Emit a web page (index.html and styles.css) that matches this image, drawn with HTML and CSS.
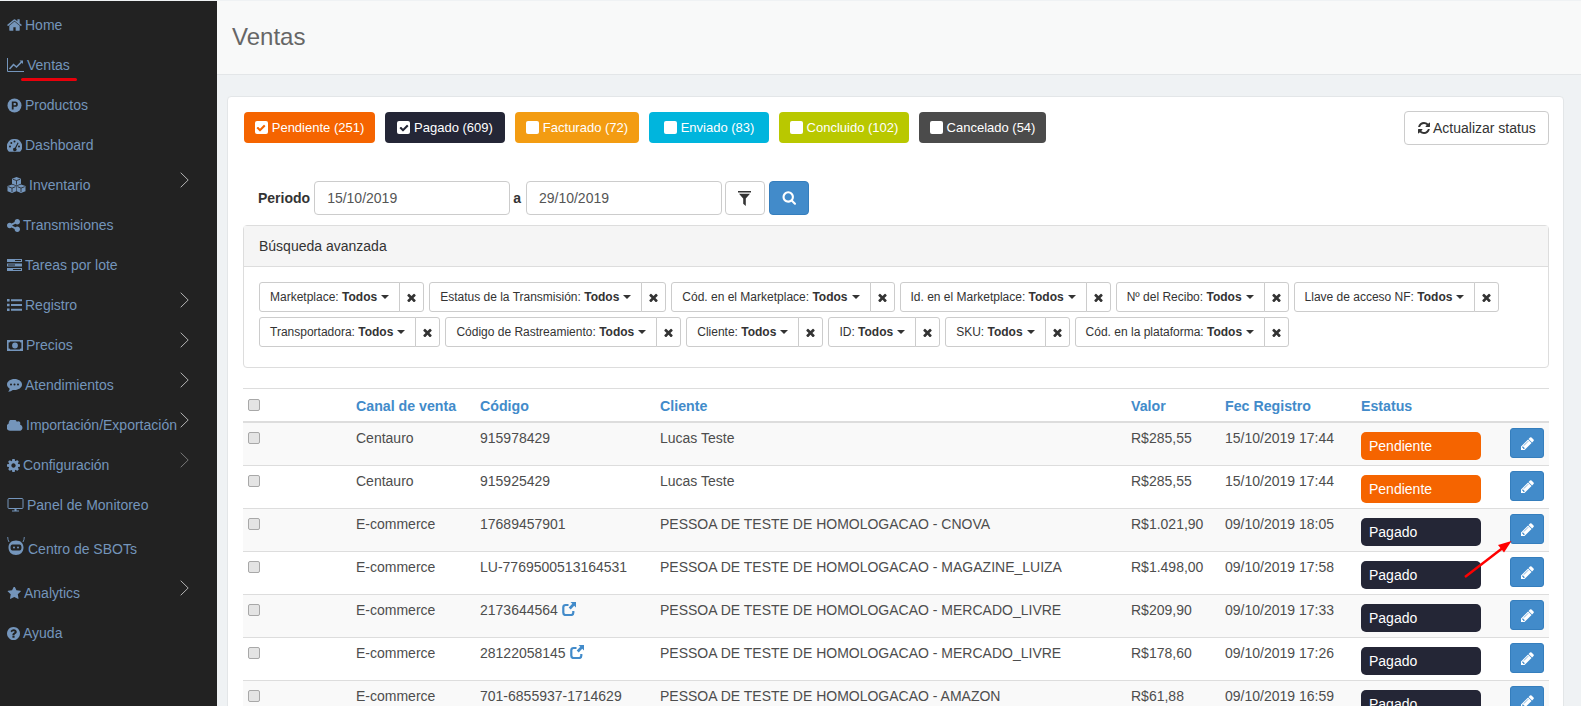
FILE: index.html
```html
<!DOCTYPE html>
<html lang="es">
<head>
<meta charset="utf-8">
<title>Ventas</title>
<link rel="stylesheet" href="styles.css">
</head>
<body>
<svg class="defs" width="0" height="0">
  <symbol id="i-home" viewBox="64 128 1664 1536"><path d="M1472 992v480q0 26-19 45t-45 19h-384v-384h-256v384h-384q-26 0-45-19t-19-45v-480q0-1 .5-3t.5-3l575-474 575 474q1 2 1 6zm223-69l-62 74q-8 9-21 11h-3q-13 0-21-7l-692-577-692 577q-12 8-24 7-13-2-21-11l-62-74q-8-10-7-23.5t11-21.5l719-599q32-26 76-26t76 26l244 204v-195q0-14 9-23t23-9h192q14 0 23 9t9 23v408l219 182q10 8 11 21.5t-7 23.5z"/></symbol>
  <symbol id="i-chart" viewBox="0 0 17 14"><path d="M.5 0v13.5H17" fill="none" stroke="currentColor"/><path d="M2.5 11l4-4.5 3 2.5L15 3.5" fill="none" stroke="currentColor" stroke-width="1.6"/><path d="M12.5 2.5H16V6z"/></symbol>
  <symbol id="i-p" viewBox="0 0 15 15"><circle cx="7.5" cy="7.5" r="7"/><path fill="#222" fill-rule="evenodd" d="M4.8 3.5h3.4a2.6 2.6 0 0 1 0 5.3H6.6v2.7H4.8zm1.8 1.6v2.1h1.4a1 1 0 0 0 0-2.1z"/></symbol>
  <symbol id="i-dash" viewBox="0 0 15 13"><path fill-rule="evenodd" d="M7.5 0A7.5 7.5 0 0 0 1.4 12.2c.2.3.5.5.9.5h10.4c.4 0 .7-.2.9-.5A7.5 7.5 0 0 0 7.5 0z"/><g fill="#222"><circle cx="3" cy="7.5" r="1"/><circle cx="4.3" cy="4" r="1"/><circle cx="7.5" cy="2.6" r="1"/><circle cx="12" cy="7.5" r="1"/><path d="M10.6 3.4l1 .5-2.6 5.3a1.7 1.7 0 1 1-1-.5z"/></g></symbol>
  <symbol id="i-cubes" viewBox="0 0 19 16"><path d="M9.500 0l4.500 1.700v5L9.500 8.400 5 6.700v-5z"/><path d="M5 7.400l4.300 1.600v5.300L5 16 .5 14.300V9z"/><path d="M14 7.400l4.500 1.600v5.300L14 16l-4.300-1.700V9z"/><path d="M5.800 2.200l3.700 1.400 3.700-1.400M1.300 9.700L5 11.100l3.500-1.400M10.500 9.700l3.500 1.400 3.700-1.400M9.500 3.600v4M5 11.100V15M14 11.100V15" fill="none" stroke="#222" stroke-width=".8"/></symbol>
  <symbol id="i-share" viewBox="128 128 1536 1536"><path d="M1344 1024q133 0 226.5 93.5t93.5 226.5-93.5 226.5-226.5 93.5-226.5-93.5-93.5-226.5q0-12 2-34l-360-180q-92 86-218 86-133 0-226.5-93.5t-93.5-226.5 93.5-226.5 226.5-93.5q126 0 218 86l360-180q-2-22-2-34 0-133 93.5-226.5t226.5-93.5 226.5 93.5 93.5 226.5-93.5 226.5-226.5 93.5q-126 0-218-86l-360 180q2 22 2 34t-2 34l360 180q92-86 218-86z"/></symbol>
  <symbol id="i-tasks" viewBox="0 0 15 12"><path d="M0 0h15v3H0zM0 4.5h15v3H0zM0 9h15v3H0z"/><path d="M8 1h6v1H8zM1 5.5h7v1H1zM6 10h8v1H6z" fill="#222"/></symbol>
  <symbol id="i-list" viewBox="0 0 15 12"><path d="M0 0h2.6v2.6H0zM4 .3h11v2H4zM0 4.7h2.6v2.6H0zM4 5h11v2H4zM0 9.4h2.6V12H0zM4 9.7h11v2H4z"/></symbol>
  <symbol id="i-money" viewBox="0 0 16 11"><path fill-rule="evenodd" d="M0 0h16v11H0zM1.6 2.4v6.2c1 0 1.6.6 1.6 1h9.6c0-.4.6-1 1.6-1V2.4c-1 0-1.6-.6-1.6-1H3.2c0 .4-.6 1-1.6 1zM8 2.6a2.9 2.9 0 1 1 0 5.8 2.9 2.9 0 0 1 0-5.8z"/><path d="M7.3 3.8h1.3v3.4H7.4V4.9l-.5.2z"/></symbol>
  <symbol id="i-comment" viewBox="0 0 15 13"><path d="M7.5 0C3.4 0 0 2.4 0 5.5c0 1.7 1 3.2 2.700 4.200C2.500 10.800 2 11.800 1.200 12.700c1.900-.2 3.600-1 4.700-1.800.5.100 1.100.1 1.600.1 4.100 0 7.500-2.400 7.500-5.500S11.600 0 7.500 0z"/><g fill="#222"><circle cx="4" cy="5.500" r="1"/><circle cx="7.500" cy="5.500" r="1"/><circle cx="11" cy="5.500" r="1"/></g></symbol>
  <symbol id="i-cloud" viewBox="0 256 1920 1280"><path d="M1856 1152q0 159-112.500 271.500t-271.500 112.500h-1088q-185 0-316.500-131.500t-131.500-316.500q0-132 71-241.500t187-163.500q-2-28-2-43 0-212 150-362t362-150q158 0 286.500 88t187.500 230q70-62 166-62 106 0 181 75t75 181q0 75-41 138 129 30 213 134.500t84 239.500z"/></symbol>
  <symbol id="i-cog" viewBox="128 128 1536 1536"><path d="M1152 896q0-106-75-181t-181-75-181 75-75 181 75 181 181 75 181-75 75-181zm512-109v222q0 12-8 23t-20 13l-185 28q-19 54-39 91 35 50 107 138 10 12 10 25t-9 23q-27 37-99 108t-94 71q-12 0-26-9l-138-108q-44 23-91 38-16 136-29 186-7 28-36 28h-222q-14 0-24.500-8.500t-11.500-21.500l-28-184q-49-16-90-37l-141 107q-10 9-25 9-14 0-25-11-126-114-165-168-7-10-7-23 0-12 8-23 15-21 51-66.500t54-70.500q-27-50-41-99l-183-27q-13-2-21-12.500t-8-23.500v-222q0-12 8-23t19-13l186-28q14-46 39-92-40-57-107-138-10-12-10-24 0-10 9-23 26-36 98.500-107.500t94.500-71.500q13 0 26 10l138 107q44-23 91-38 16-136 29-186 7-28 36-28h222q14 0 24.500 8.500t11.500 21.500l28 184q49 16 90 37l142-107q9-9 24-9 13 0 25 10 129 119 165 170 7 8 7 22 0 12-8 23-15 21-51 66.500t-54 70.500q26 50 41 98l183 28q13 2 21 12.500t8 23.500z"/></symbol>
  <symbol id="i-desktop" viewBox="0 0 16 14"><rect x=".5" y=".5" width="15" height="10" rx="1" fill="none" stroke="currentColor"/><path d="M7 11h2v1.500H7zM4.500 12.500h7v1h-7z"/></symbol>
  <symbol id="i-bot" viewBox="0 0 18 18"><path d="M.7 0c.1 2 .4 3.500 1.300 5M17.300 0c-.1 2-.4 3.500-1.300 5" fill="none" stroke="currentColor" stroke-width=".9"/><path fill-rule="evenodd" d="M9 3.500c4.800 0 7.500 2.800 7.500 7 0 4.500-3 7.500-7.500 7.500s-7.500-3-7.500-7.500c0-4.200 2.700-7 7.500-7zM5.500 7.500C4.200 7.500 3.500 8.800 3.500 10.500s.7 3 2 3h7c1.300 0 2-1.300 2-3s-.7-3-2-3z"/><circle cx="7" cy="10.500" r="1"/><circle cx="11" cy="10.500" r="1"/></symbol>
  <symbol id="i-star" viewBox="0 128 1728 1632"><path d="M1728 647q0 22-26 48l-363 354 86 500q1 7 1 20 0 21-10.500 35.500t-30.500 14.500q-19 0-40-12l-449-236-449 236q-22 12-40 12-21 0-31.500-14.500t-10.500-35.500q0-6 2-20l86-500-364-354q-25-27-25-48 0-37 56-46l502-73 225-455q19-41 49-41t49 41l225 455 502 73q56 9 56 46z"/></symbol>
  <symbol id="i-help" viewBox="128 128 1536 1536"><path d="M1024 1376v-192q0-14-9-23t-23-9h-192q-14 0-23 9t-9 23v192q0 14 9 23t23 9h192q14 0 23-9t9-23zm256-672q0-88-55.500-163t-138.500-116-170-41q-243 0-371 213-15 24 8 42l132 100q7 6 19 6 16 0 25-12 53-68 86-92 34-24 86-24 48 0 85.500 26t37.500 59q0 38-20 61t-68 45q-63 28-115.500 86.500t-52.500 125.500v36q0 14 9 23t23 9h192q14 0 23-9t9-23q0-19 21.500-49.500t54.500-49.500q32-18 49-28.500t46-35 44.500-48 28-60.500 12.500-81zm384 192q0 209-103 385.500t-279.500 279.500-385.500 103-385.500-103-279.500-279.500-103-385.500 103-385.500 279.500-279.500 385.500-103 385.500 103 279.500 279.500 103 385.500z"/></symbol>
  <symbol id="i-chev" viewBox="0 0 9 16"><path d="M.7.7L8.200 8 .7 15.300" fill="none" stroke="currentColor" stroke-width="1"/></symbol>
  <symbol id="i-check" viewBox="0 0 1792 1792"><path d="M1671 566q0 40-28 68l-724 724-136 136q-28 28-68 28t-68-28l-136-136-362-362q-28-28-28-68t28-68l136-136q28-28 68-28t68 28l294 295 656-657q28-28 68-28t68 28l136 136q28 28 28 68z"/></symbol>
  <symbol id="i-refresh" viewBox="128 128 1536 1536"><path d="M1639 1056q0 5-1 7-64 268-268 434.500t-478 166.500q-146 0-282.500-55t-243.500-157l-129 129q-19 19-45 19t-45-19-19-45v-448q0-26 19-45t45-19h448q26 0 45 19t19 45-19 45l-137 137q71 66 161 102t187 36q134 0 250-65t186-179q11-17 53-117 8-23 30-23h192q13 0 22.500 9.500t9.500 22.500zm25-800v448q0 26-19 45t-45 19h-448q-26 0-45-19t-19-45 19-45l138-138q-148-137-349-137-134 0-250 65t-186 179q-11 17-53 117-8 23-30 23h-199q-13 0-22.500-9.500t-9.500-22.500v-7q65-268 270-434.500t480-166.500q146 0 284 55.500t245 156.500l130-129q19-19 45-19t45 19 19 45z"/></symbol>
  <symbol id="i-filter" viewBox="0 0 13 15"><path d="M0 0h13v1.500H0zM1 2.800h11L7.800 7.500V15L5.200 12.800V7.500z"/></symbol>
  <symbol id="i-search" viewBox="0 128 1728 1664"><path d="M1216 832q0-185-131.500-316.500t-316.500-131.500-316.500 131.500-131.500 316.500 131.500 316.500 316.500 131.500 316.500-131.500 131.500-316.500zm512 832q0 52-38 90t-90 38q-54 0-90-38l-343-342q-179 124-399 124-143 0-273.500-55.500t-225-150-150-225-55.500-273.500 55.500-273.500 150-225 225-150 273.500-55.500 273.500 55.500 225 150 150 225 55.500 273.500q0 220-124 399l343 343q37 37 37 90z"/></symbol>
  <symbol id="i-x" viewBox="256 256 1280 1280"><path d="M1490 1322q0 40-28 68l-136 136q-28 28-68 28t-68-28l-294-294-294 294q-28 28-68 28t-68-28l-136-136q-28-28-28-68t28-68l294-294-294-294q-28-28-28-68t28-68l136-136q28-28 68-28t68 28l294 294 294-294q28-28 68-28t68 28l136 136q28 28 28 68t-28 68l-294 294 294 294q28 28 28 68z"/></symbol>
  <symbol id="i-pencil" viewBox="128 128 1536 1536"><path d="M491 1536l91-91-235-235-91 91v107h128v128h107zm523-928q0-22-22-22-10 0-17 7l-542 542q-7 7-7 17 0 22 22 22 10 0 17-7l542-542q7-7 7-17zm-54-192l416 416-832 832h-416v-416zm683 96q0 53-37 90l-166 166-416-416 166-165q36-38 90-38 53 0 91 38l235 234q37 39 37 91z"/></symbol>
  <symbol id="i-ext" viewBox="0 0 14 14"><path d="M6.500 3H3.500A2.200 2.200 0 0 0 1.300 5.200v5.600a2.200 2.200 0 0 0 2.200 2.200h5.600a2.200 2.200 0 0 0 2.200-2.200V9" fill="none" stroke="currentColor" stroke-width="2.200"/><path d="M8.500 0H14v5.500l-1.800-1.700-3.500 3.700-2-2 3.600-3.700z"/></symbol>
</svg>

<aside class="sidebar">
  <span class="ventas-mark"></span>
  <a class="nav-item"><svg class="ic" width="15" height="14"><use href="#i-home"/></svg><span>Home</span></a>
  <a class="nav-item"><svg class="ic" width="17" height="14"><use href="#i-chart"/></svg><span>Ventas</span></a>
  <a class="nav-item"><svg class="ic" width="15" height="15"><use href="#i-p"/></svg><span>Productos</span></a>
  <a class="nav-item"><svg class="ic" width="15" height="13"><use href="#i-dash"/></svg><span>Dashboard</span></a>
  <a class="nav-item"><svg class="ic" width="19" height="16"><use href="#i-cubes"/></svg><span>Inventario</span><svg class="chev" width="9" height="16"><use href="#i-chev"/></svg></a>
  <a class="nav-item"><svg class="ic" width="13" height="13"><use href="#i-share"/></svg><span>Transmisiones</span></a>
  <a class="nav-item"><svg class="ic" width="15" height="12"><use href="#i-tasks"/></svg><span>Tareas por lote</span></a>
  <a class="nav-item"><svg class="ic" width="15" height="12"><use href="#i-list"/></svg><span>Registro</span><svg class="chev" width="9" height="16"><use href="#i-chev"/></svg></a>
  <a class="nav-item"><svg class="ic" width="16" height="11"><use href="#i-money"/></svg><span>Precios</span><svg class="chev" width="9" height="16"><use href="#i-chev"/></svg></a>
  <a class="nav-item"><svg class="ic" width="15" height="13"><use href="#i-comment"/></svg><span>Atendimientos</span><svg class="chev" width="9" height="16"><use href="#i-chev"/></svg></a>
  <a class="nav-item"><svg class="ic" width="16" height="11"><use href="#i-cloud"/></svg><span>Importación/Exportación</span><svg class="chev" width="9" height="16"><use href="#i-chev"/></svg></a>
  <a class="nav-item"><svg class="ic" width="13" height="13"><use href="#i-cog"/></svg><span>Configuración</span><svg class="chev dim" width="9" height="16"><use href="#i-chev"/></svg></a>
  <a class="nav-item"><svg class="ic" width="17" height="14"><use href="#i-desktop"/></svg><span>Panel de Monitoreo</span></a>
  <a class="nav-item nav-tall"><svg class="ic ic-bot" width="18" height="18"><use href="#i-bot"/></svg><span>Centro de SBOTs</span></a>
  <a class="nav-item"><svg class="ic" width="14" height="13"><use href="#i-star"/></svg><span>Analytics</span><svg class="chev" width="9" height="16"><use href="#i-chev"/></svg></a>
  <a class="nav-item"><svg class="ic" width="13" height="13"><use href="#i-help"/></svg><span>Ayuda</span></a>
</aside>

<main class="main">
  <header class="page-head"><h1>Ventas</h1></header>
  <section class="card">
    <div class="status-row">
      <div class="status-list">
        <span class="st st-orange"><span class="box"><svg width="10" height="10"><use href="#i-check"/></svg></span>Pendiente (251)</span>
        <span class="st st-navy"><span class="box"><svg width="10" height="10"><use href="#i-check"/></svg></span>Pagado (609)</span>
        <span class="st st-amber"><span class="box"></span>Facturado (72)</span>
        <span class="st st-cyan"><span class="box"></span>Enviado (83)</span>
        <span class="st st-lime"><span class="box"></span>Concluido (102)</span>
        <span class="st st-gray"><span class="box"></span>Cancelado (54)</span>
      </div>
      <button class="refresh"><svg width="12" height="12"><use href="#i-refresh"/></svg>Actualizar status</button>
    </div>

    <div class="period">
      <label class="p-label">Periodo</label>
      <input class="date" value="15/10/2019">
      <label class="p-a">a</label>
      <input class="date" value="29/10/2019">
      <button class="filter-btn"><svg width="13" height="15"><use href="#i-filter"/></svg></button>
      <button class="search-btn"><svg width="14" height="14"><use href="#i-search"/></svg></button>
    </div>

    <div class="panel">
      <div class="panel-head">Búsqueda avanzada</div>
      <div class="panel-body">
        <div class="chip"><span class="chip-main">Marketplace: <b>Todos</b><i class="caret"></i></span><span class="chip-x"><svg width="9" height="9"><use href="#i-x"/></svg></span></div>
        <div class="chip"><span class="chip-main">Estatus de la Transmisión: <b>Todos</b><i class="caret"></i></span><span class="chip-x"><svg width="9" height="9"><use href="#i-x"/></svg></span></div>
        <div class="chip"><span class="chip-main">Cód. en el Marketplace: <b>Todos</b><i class="caret"></i></span><span class="chip-x"><svg width="9" height="9"><use href="#i-x"/></svg></span></div>
        <div class="chip"><span class="chip-main">Id. en el Marketplace: <b>Todos</b><i class="caret"></i></span><span class="chip-x"><svg width="9" height="9"><use href="#i-x"/></svg></span></div>
        <div class="chip"><span class="chip-main">Nº del Recibo: <b>Todos</b><i class="caret"></i></span><span class="chip-x"><svg width="9" height="9"><use href="#i-x"/></svg></span></div>
        <div class="chip"><span class="chip-main">Llave de acceso NF: <b>Todos</b><i class="caret"></i></span><span class="chip-x"><svg width="9" height="9"><use href="#i-x"/></svg></span></div>
        <div class="chip"><span class="chip-main">Transportadora: <b>Todos</b><i class="caret"></i></span><span class="chip-x"><svg width="9" height="9"><use href="#i-x"/></svg></span></div>
        <div class="chip"><span class="chip-main">Código de Rastreamiento: <b>Todos</b><i class="caret"></i></span><span class="chip-x"><svg width="9" height="9"><use href="#i-x"/></svg></span></div>
        <div class="chip"><span class="chip-main">Cliente: <b>Todos</b><i class="caret"></i></span><span class="chip-x"><svg width="9" height="9"><use href="#i-x"/></svg></span></div>
        <div class="chip"><span class="chip-main">ID: <b>Todos</b><i class="caret"></i></span><span class="chip-x"><svg width="9" height="9"><use href="#i-x"/></svg></span></div>
        <div class="chip"><span class="chip-main">SKU: <b>Todos</b><i class="caret"></i></span><span class="chip-x"><svg width="9" height="9"><use href="#i-x"/></svg></span></div>
        <div class="chip"><span class="chip-main">Cód. en la plataforma: <b>Todos</b><i class="caret"></i></span><span class="chip-x"><svg width="9" height="9"><use href="#i-x"/></svg></span></div>
      </div>
    </div>

    <table class="orders">
      <colgroup><col class="c1"><col class="c2"><col class="c3"><col class="c4"><col class="c5"><col class="c6"><col class="c7"><col class="c8"></colgroup>
      <thead>
        <tr><th><input type="checkbox" class="cb"></th><th>Canal de venta</th><th>Código</th><th>Cliente</th><th>Valor</th><th>Fec Registro</th><th>Estatus</th><th></th></tr>
      </thead>
      <tbody>
        <tr><td><input type="checkbox" class="cb"></td><td>Centauro</td><td>915978429</td><td>Lucas Teste</td><td>R$285,55</td><td>15/10/2019 17:44</td><td><span class="badge b-orange">Pendiente</span></td><td><button class="edit"><svg width="13" height="13"><use href="#i-pencil"/></svg></button></td></tr>
        <tr><td><input type="checkbox" class="cb"></td><td>Centauro</td><td>915925429</td><td>Lucas Teste</td><td>R$285,55</td><td>15/10/2019 17:44</td><td><span class="badge b-orange">Pendiente</span></td><td><button class="edit"><svg width="13" height="13"><use href="#i-pencil"/></svg></button></td></tr>
        <tr><td><input type="checkbox" class="cb"></td><td>E-commerce</td><td>17689457901</td><td>PESSOA DE TESTE DE HOMOLOGACAO - CNOVA</td><td>R$1.021,90</td><td>09/10/2019 18:05</td><td><span class="badge b-navy">Pagado</span></td><td><button class="edit"><svg width="13" height="13"><use href="#i-pencil"/></svg></button></td></tr>
        <tr><td><input type="checkbox" class="cb"></td><td>E-commerce</td><td>LU-7769500513164531</td><td>PESSOA DE TESTE DE HOMOLOGACAO - MAGAZINE_LUIZA</td><td>R$1.498,00</td><td>09/10/2019 17:58</td><td><span class="badge b-navy">Pagado</span></td><td><button class="edit"><svg width="13" height="13"><use href="#i-pencil"/></svg></button></td></tr>
        <tr><td><input type="checkbox" class="cb"></td><td>E-commerce</td><td>2173644564 <svg class="ext" width="14" height="14"><use href="#i-ext"/></svg></td><td>PESSOA DE TESTE DE HOMOLOGACAO - MERCADO_LIVRE</td><td>R$209,90</td><td>09/10/2019 17:33</td><td><span class="badge b-navy">Pagado</span></td><td><button class="edit"><svg width="13" height="13"><use href="#i-pencil"/></svg></button></td></tr>
        <tr><td><input type="checkbox" class="cb"></td><td>E-commerce</td><td>28122058145 <svg class="ext" width="14" height="14"><use href="#i-ext"/></svg></td><td>PESSOA DE TESTE DE HOMOLOGACAO - MERCADO_LIVRE</td><td>R$178,60</td><td>09/10/2019 17:26</td><td><span class="badge b-navy">Pagado</span></td><td><button class="edit"><svg width="13" height="13"><use href="#i-pencil"/></svg></button></td></tr>
        <tr><td><input type="checkbox" class="cb"></td><td>E-commerce</td><td>701-6855937-1714629</td><td>PESSOA DE TESTE DE HOMOLOGACAO - AMAZON</td><td>R$61,88</td><td>09/10/2019 16:59</td><td><span class="badge b-navy">Pagado</span></td><td><button class="edit"><svg width="13" height="13"><use href="#i-pencil"/></svg></button></td></tr>
      </tbody>
    </table>
  </section>
</main>

<svg class="arrow" width="60" height="50" viewBox="0 0 60 50"><path d="M5 42L42 13.500" stroke="#f00" stroke-width="2.400" fill="none"/><path d="M51.500 6L38 10l6 7.500z" fill="#f00"/></svg>
</body>
</html>
```
FILE: styles.css
```css
* { box-sizing: border-box; }
html, body { margin: 0; height: 100%; }
body {
  display: flex;
  height: 706px;
  overflow: hidden;
  position: relative;
  background: #eff2f4;
  font: 14px/20px "Liberation Sans", Arial, sans-serif;
  color: #333;
}
.defs { position: absolute; }
.ic, .chev { flex: none; }
svg { fill: currentColor; display: block; }

/* sidebar */
.sidebar {
  position: relative;
  flex: none;
  width: 217px;
  height: 706px;
  margin-top: 1px;
  padding: 4px 28px 0 7px;
  background: #222;
  color: #7495bb;
}
.nav-item {
  display: flex;
  align-items: center;
  gap: 3px;
  height: 40px;
  white-space: nowrap;
}
.nav-tall { height: 48px; }
.ic-bot { margin-top: -6px; }
.chev { margin-left: auto; margin-bottom: 10px; color: #b3b3b3; }
.chev.dim { color: #777; }
.ventas-mark {
  position: absolute;
  left: 21px;
  top: 77px;
  width: 56px;
  height: 3px;
  border-radius: 2px;
  background: #e8000b;
}

/* main */
.main { flex: 1; min-width: 0; padding-top: 1px; }
.page-head {
  height: 74px;
  padding: 0 15px;
  background: #f8f9f9;
  border-bottom: 1px solid #e3e6e8;
}
.page-head h1 {
  margin: 0;
  font-size: 24px;
  font-weight: 400;
  line-height: 72px;
  color: #666;
}
.card {
  width: 1337px;
  margin: 21px 0 0 10px;
  padding: 14px 14px 0 15px;
  background: #fff;
  border: 1px solid #e3e6e8;
  border-radius: 4px;
}
.status-row { display: flex; justify-content: space-between; padding-left: 1px; }
.status-list { display: flex; gap: 10px; padding-top: 1px; }
.st {
  display: flex;
  align-items: center;
  justify-content: center;
  height: 31px;
  border-radius: 4px;
  font-size: 13px;
  color: #fff;
  white-space: nowrap;
}
.box {
  display: flex;
  align-items: center;
  justify-content: center;
  width: 13px;
  height: 13px;
  margin-right: 4px;
  border-radius: 2px;
  background: #fff;
}
.st-orange { width: 131px; background: #f56400; }
.st-orange .box { color: #f56400; }
.st-navy { width: 120px; background: #242636; }
.st-navy .box { color: #242636; }
.st-amber { width: 124px; background: #f39c12; }
.st-cyan { width: 120px; background: #00b5dd; }
.st-lime { width: 130px; background: #b9c800; }
.st-gray { width: 127px; background: #4b4b4b; }
.refresh {
  display: flex;
  align-items: center;
  gap: 3px;
  height: 34px;
  width: 145px;
  padding: 0 0 0 13px;
  background: #fff;
  border: 1px solid #ccc;
  border-radius: 4px;
  font: inherit;
  color: #333;
}

.period {
  display: flex;
  align-items: center;
  gap: 4px;
  margin-top: 36px;
  padding-left: 15px;
}
.p-label, .p-a { font-weight: 700; color: #333; }
.p-a { margin-left: -1px; margin-right: 1px; }
.date {
  width: 196px;
  height: 34px;
  padding: 0 12px;
  border: 1px solid #ccc;
  border-radius: 4px;
  font: inherit;
  color: #555;
  outline: 0;
}
.filter-btn, .search-btn {
  display: flex;
  align-items: center;
  justify-content: center;
  height: 34px;
  padding: 0;
  border-radius: 4px;
  border: 1px solid #ccc;
}
.filter-btn { width: 40px; margin-left: -1px; background: #fff; color: #333; }
.search-btn { width: 40px; background: #428bca; border-color: #357ebd; color: #fff; }

.panel {
  margin-top: 10px;
  border: 1px solid #ddd;
  border-radius: 4px;
}
.panel-head {
  height: 41px;
  padding: 10px 15px;
  background: #f5f5f5;
  border-bottom: 1px solid #ddd;
  color: #333;
}
.panel-body {
  display: flex;
  flex-wrap: wrap;
  gap: 5px;
  padding: 15px 15px 20px;
}
.chip { display: flex; height: 30px; font-size: 12px; line-height: 18px; color: #333; }
.chip-main, .chip-x {
  display: flex;
  align-items: center;
  border: 1px solid #ccc;
  background: #fff;
}
.chip-main { padding: 0 10px; border-radius: 3px 0 0 3px; white-space: pre; }
.chip-x { margin-left: -1px; width: 25px; justify-content: center; border-radius: 0 3px 3px 0; }
.chip b { font-weight: 700; }
.caret {
  width: 0;
  height: 0;
  margin-left: 4px;
  border-top: 4px solid #333;
  border-left: 4px solid transparent;
  border-right: 4px solid transparent;
}

/* table */
.orders {
  width: 1306px;
  margin-top: 20px;
  table-layout: fixed;
  border-collapse: separate;
  border-spacing: 0;
}
.c1 { width: 113px; } .c2 { width: 124px; } .c3 { width: 180px; } .c4 { width: 471px; }
.c5 { width: 94px; } .c6 { width: 136px; } .c7 { width: 149px; } .c8 { width: 39px; }
.orders th {
  height: 35px;
  padding: 7px 0 0;
  border-top: 1px solid #ddd;
  border-bottom: 2px solid #ddd;
  vertical-align: top;
  text-align: left;
  font-size: 14.2px;
  color: #428bca;
}
.orders td {
  height: 43px;
  padding: 5px 0 0;
  border-bottom: 1px solid #ddd;
  vertical-align: top;
  color: #4d4d4d;
  white-space: nowrap;
}
.orders tbody tr:nth-child(odd) { background: #f9f9f9; }
.orders th:first-child, .orders td:first-child { padding-left: 5px; }
.cb {
  appearance: none;
  display: block;
  width: 12px;
  height: 12px;
  margin: 4px 0 0;
  background: #e4e4e4;
  border: 1px solid #a8a8a8;
  border-radius: 2px;
}
th .cb { margin-top: 3px; }
.ext { display: inline-block; vertical-align: -1px; color: #428bca; }
.badge {
  display: block;
  width: 120px;
  height: 28px;
  margin-top: 4px;
  padding-left: 8px;
  border-radius: 5px;
  line-height: 28px;
  color: #fff;
}
.b-orange { background: #f56400; }
.b-navy { background: #242636; }
.edit {
  display: flex;
  align-items: center;
  justify-content: center;
  width: 34px;
  height: 30px;
  padding: 0;
  background: #428bca;
  border: 1px solid #357ebd;
  border-radius: 3px;
  color: #fff;
}
.arrow { position: absolute; left: 1460px; top: 535px; }
```
